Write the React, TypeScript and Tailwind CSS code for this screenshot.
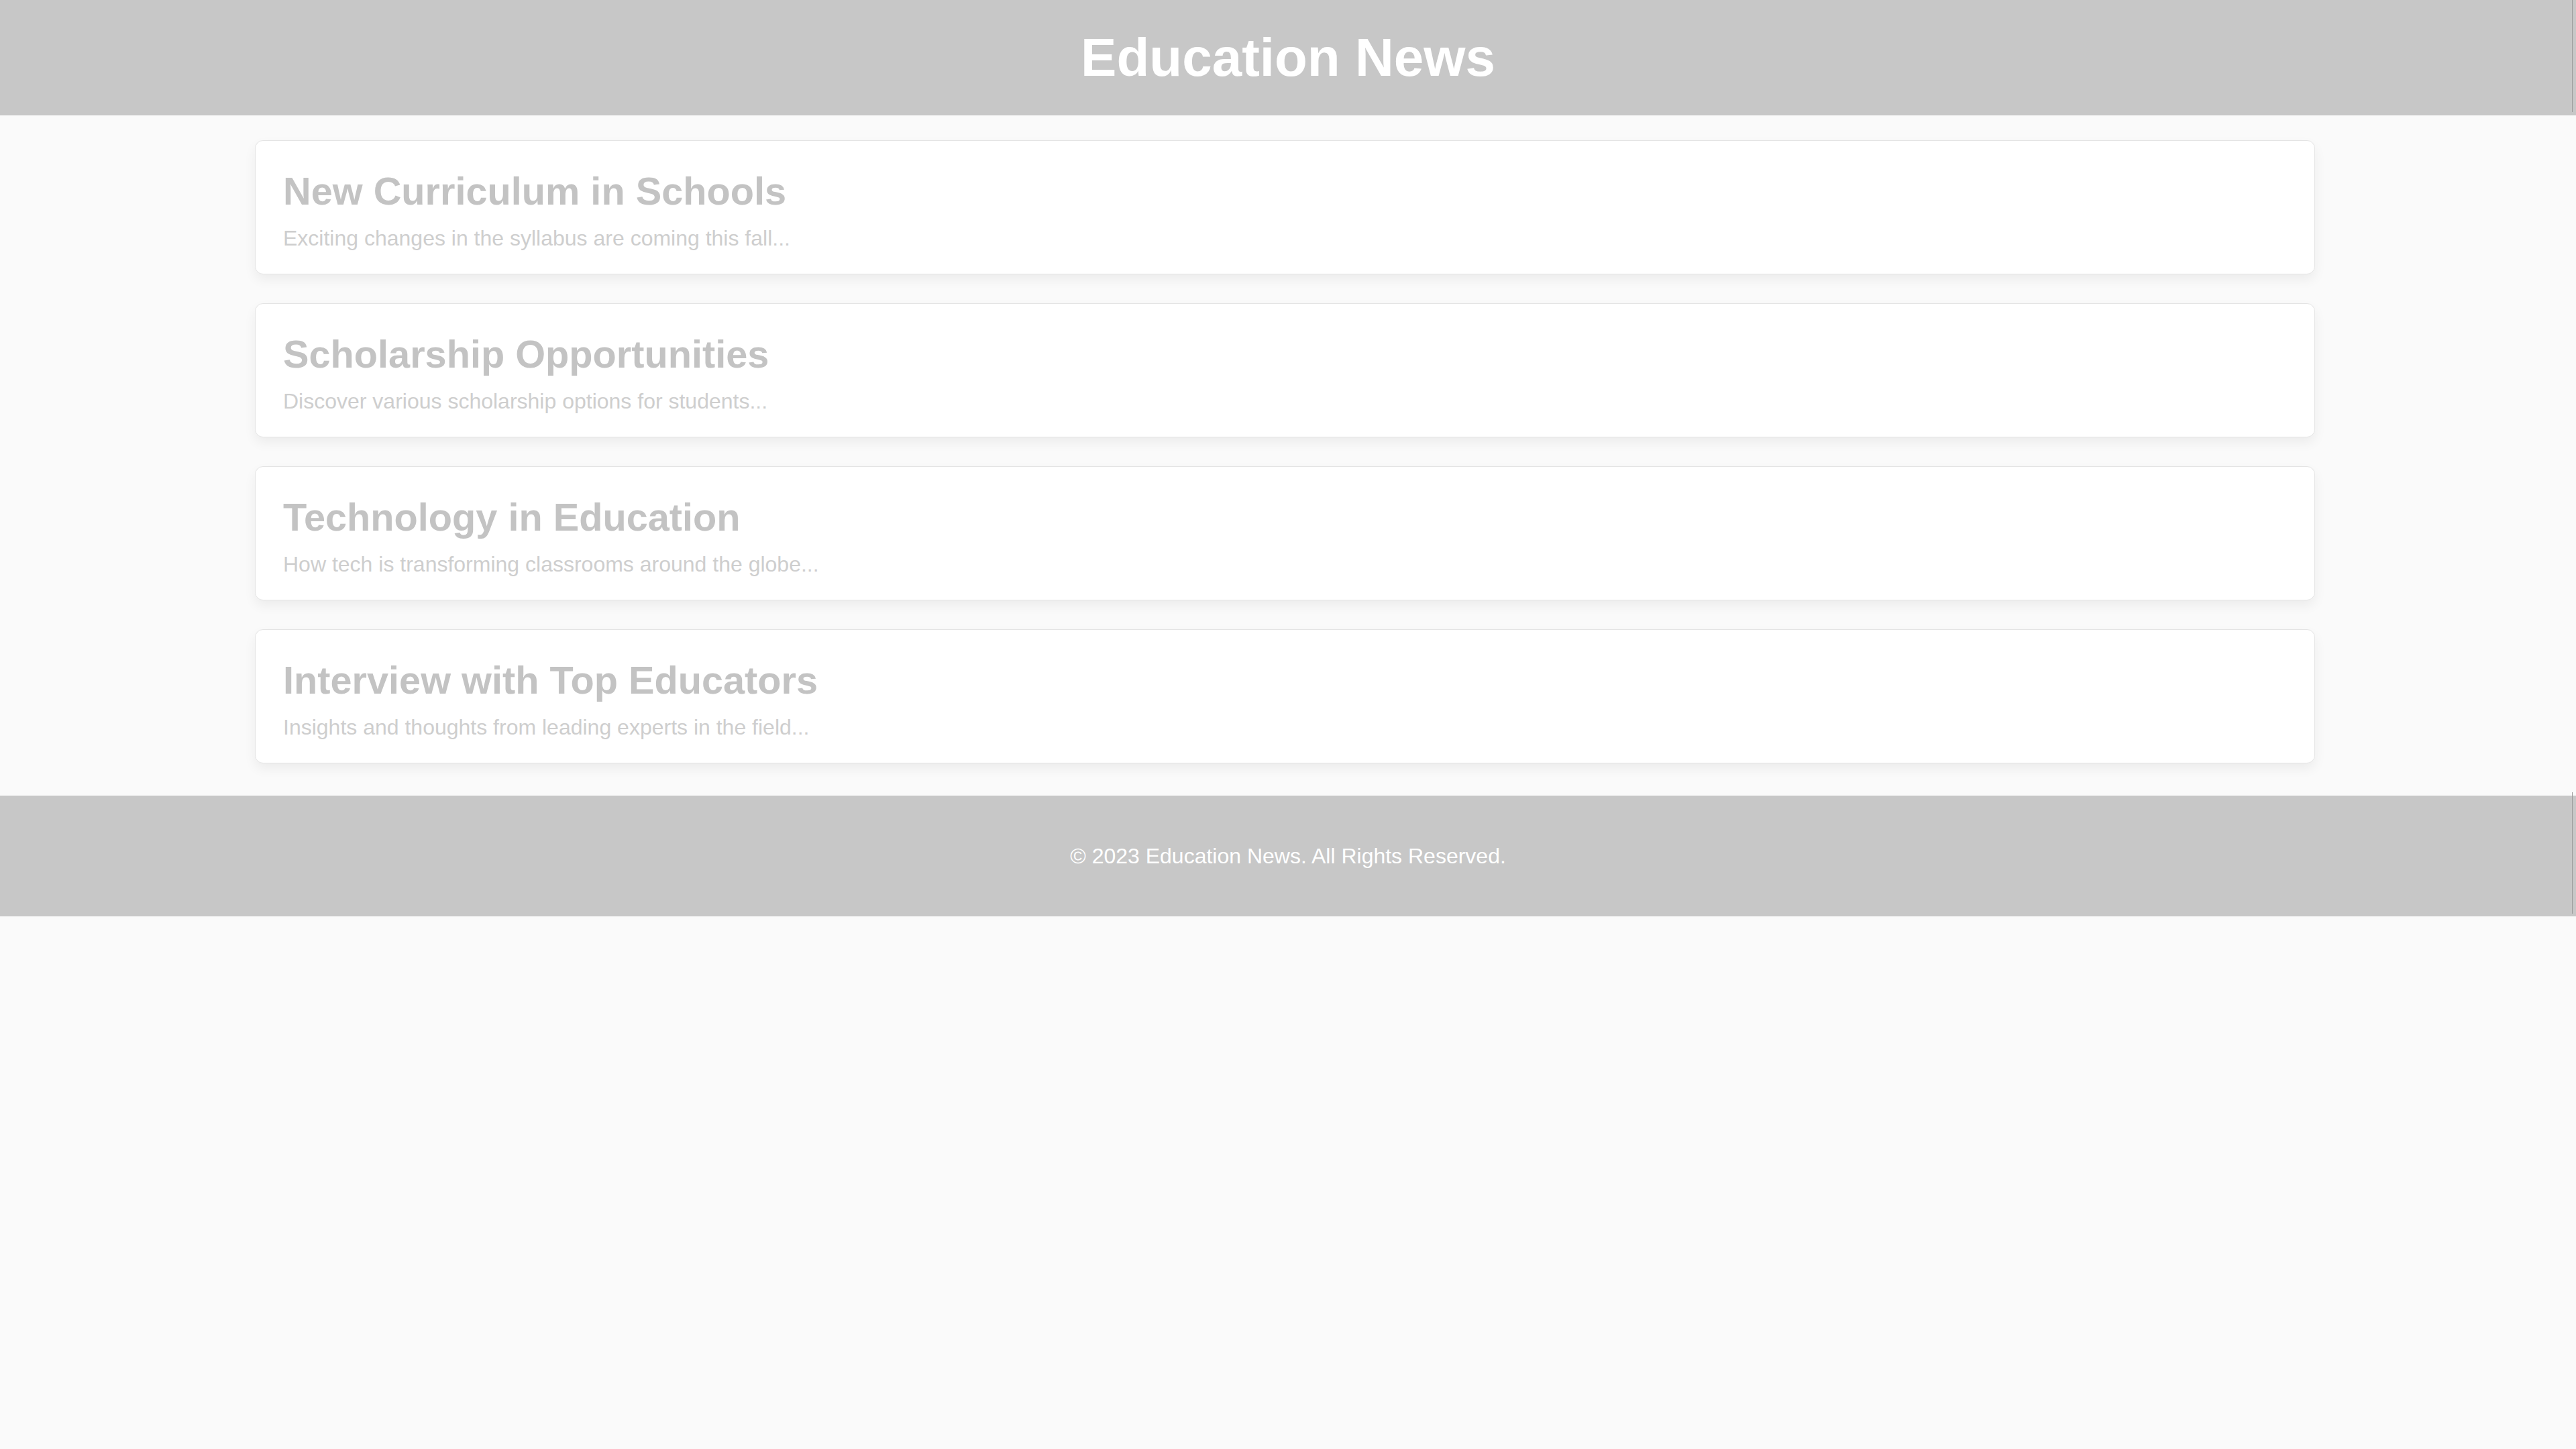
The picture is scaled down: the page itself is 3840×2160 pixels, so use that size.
const ARTICLES = [
  { title: 'New Curriculum in Schools', summary: 'Exciting changes in the syllabus are coming this fall...' },
  { title: 'Scholarship Opportunities', summary: 'Discover various scholarship options for students...' },
  { title: 'Technology in Education', summary: 'How tech is transforming classrooms around the globe...' },
  { title: 'Interview with Top Educators', summary: 'Insights and thoughts from leading experts in the field...' },
];

function ArticleCard({ title, summary }: { title: string; summary: string }) {
  return (
    <article className="bg-white border border-[#e4e4e4] rounded-[12px] shadow-[0_8px_18px_rgba(0,0,0,0.06)] pl-[41px] pr-[41px] pt-[42px] pb-[34px]">
      <h2 className="text-[57.7px] leading-[66px] font-bold text-[#c3c3c3]">{title}</h2>
      <p className="mt-[19px] text-[32px] leading-[37px] text-[#cecece]">{summary}</p>
    </article>
  );
}

export default function App() {
  return (
    <div className="min-h-screen bg-[#fafafa] font-['Liberation_Sans',Arial,sans-serif]">
      {/* Header */}
      <header className="relative h-[172px] bg-[#c7c7c7] flex justify-center pt-[40px]">
        <h1 className="text-[80px] leading-[92px] font-bold text-white">Education News</h1>
        <span className="absolute right-[5px] top-0 bottom-[5px] w-px bg-[#9c9c9c]" />
      </header>

      {/* Articles */}
      <main className="flex flex-col gap-[43px] pt-[37px] pb-[48px] pl-[380px] pr-[389px]">
        {ARTICLES.map((a) => (
          <ArticleCard key={a.title} title={a.title} summary={a.summary} />
        ))}
      </main>

      {/* Footer */}
      <footer className="relative h-[180px] bg-[#c7c7c7] flex items-center justify-center">
        <p className="text-[32px] leading-[37px] text-white">© 2023 Education News. All Rights Reserved.</p>
        <span className="absolute right-[5px] -top-[5px] bottom-[4px] w-px bg-[#9c9c9c]" />
      </footer>
    </div>
  );
}
